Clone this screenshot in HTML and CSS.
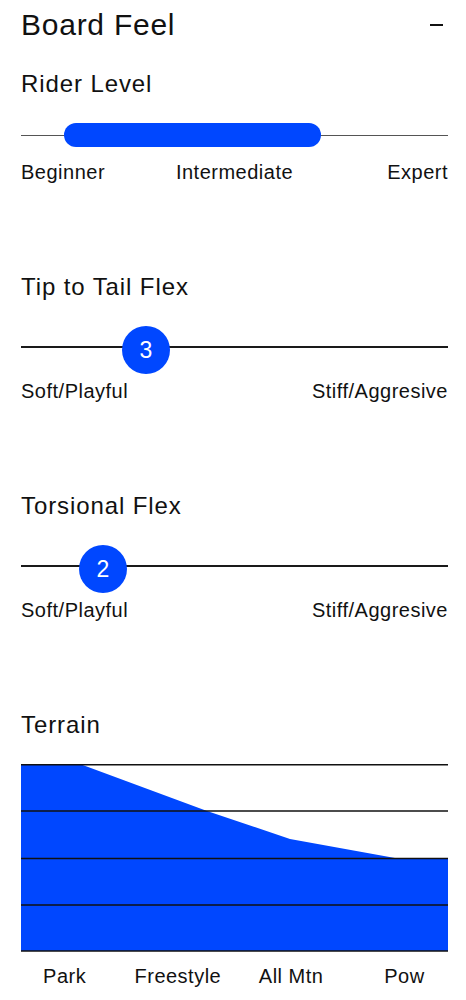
FILE: index.html
```html
<!DOCTYPE html>
<html lang="en">
<head>
  <meta charset="UTF-8" />
  <meta name="viewport" content="width=device-width, initial-scale=1.0"/>
  <title>Board Feel</title>
  <link rel="stylesheet" href="styles.css">
</head>
<body>
  <div class="panel-head">
    <h1>Board Feel</h1>
    <span class="collapse"></span>
  </div>

  <div class="section">
    <h2>Rider Level</h2>
    <div class="range">
      <div class="range-fill" style="left: 43px; width: 257px;"></div>
    </div>
    <div class="labels three">
      <span>Beginner</span>
      <span>Intermediate</span>
      <span>Expert</span>
    </div>
  </div>

  <div class="section">
    <h2>Tip to Tail Flex</h2>
    <div class="slider">
      <div class="knob" style="left: 101px;">3</div>
    </div>
    <div class="labels two">
      <span>Soft/Playful</span>
      <span>Stiff/Aggresive</span>
    </div>
  </div>

  <div class="section">
    <h2>Torsional Flex</h2>
    <div class="slider">
      <div class="knob" style="left: 58px;">2</div>
    </div>
    <div class="labels two">
      <span>Soft/Playful</span>
      <span>Stiff/Aggresive</span>
    </div>
  </div>

  <div class="section">
    <h2>Terrain</h2>
    <svg class="chart" width="427" height="188" viewBox="0 0 427 188">
      <polygon fill="#0047ff" points="0,0 59,0 186,47 269,75 374,94 427,94 427,187 0,187"/>
      <g stroke="#111" stroke-width="1.5">
        <line x1="0" y1="0.75" x2="427" y2="0.75"/>
        <line x1="0" y1="47" x2="427" y2="47"/>
        <line x1="0" y1="94.5" x2="427" y2="94.5"/>
        <line x1="0" y1="141" x2="427" y2="141"/>
        <line x1="0" y1="187" x2="427" y2="187"/>
      </g>
    </svg>
    <div class="labels terrain">
      <span>Park</span>
      <span>Freestyle</span>
      <span>All Mtn</span>
      <span>Pow</span>
    </div>
  </div>
</body>
</html>
```

FILE: styles.css
```css
body {
  margin: 0;
  padding: 7px 18px 0 21px;
  font-family: "Liberation Sans", Arial, sans-serif;
  color: #111;
  background: #fff;
}

.panel-head {
  display: flex;
  justify-content: space-between;
  align-items: center;
}

h1 {
  margin: 0;
  font-size: 30px;
  line-height: 36px;
  font-weight: 400;
  letter-spacing: 0.75px;
}

.collapse {
  width: 13px;
  height: 2px;
  margin-right: 5px;
  background: #111;
}

.section {
  margin-top: 27px;
}

.section + .section {
  margin-top: 89px;
}

h2 {
  margin: 0 0 25px;
  font-size: 24px;
  line-height: 28px;
  font-weight: 400;
  letter-spacing: 0.9px;
}

.range {
  position: relative;
  height: 24px;
}

.range::before {
  content: "";
  position: absolute;
  left: 0;
  right: 0;
  top: 12px;
  height: 1px;
  background: #555;
}

.range-fill {
  position: absolute;
  top: 0;
  height: 24px;
  border-radius: 12px;
  background: #0047ff;
}

.slider {
  position: relative;
  height: 48px;
}

.slider::before {
  content: "";
  position: absolute;
  left: 0;
  right: 0;
  top: 20px;
  height: 2px;
  background: #1a1a1a;
}

.knob {
  position: absolute;
  top: 0;
  width: 48px;
  height: 48px;
  border-radius: 50%;
  background: #0047ff;
  color: #fff;
  font-size: 23px;
  line-height: 48px;
  text-align: center;
}

.labels {
  font-size: 20px;
  line-height: 24px;
  letter-spacing: 0.5px;
}

.labels.three {
  display: grid;
  grid-template-columns: 1fr auto 1fr;
  margin-top: 13px;
}

.labels.three span:nth-child(2) {
  text-align: center;
}

.labels.three span:last-child {
  text-align: right;
}

.labels.two {
  display: flex;
  justify-content: space-between;
  margin-top: 5px;
}

.chart {
  display: block;
}

.labels.terrain {
  display: grid;
  grid-template-columns: repeat(4, 1fr);
  margin: 12px -13px 0;
  text-align: center;
}
```
